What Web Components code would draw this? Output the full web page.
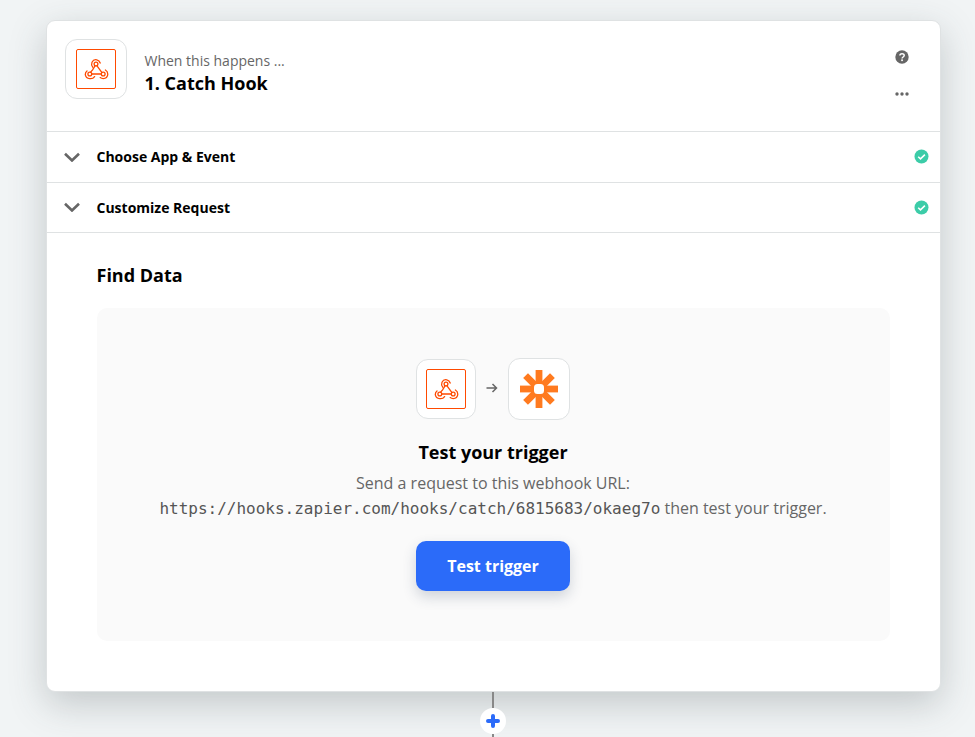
<!DOCTYPE html>
<html>
<head>
<meta charset="utf-8">
<style>
  html, body { margin: 0; height: 100%; overflow: hidden; }
  body {
    background: #f1f4f5;
    font-family: "Open Sans", sans-serif;
    color: #000;
  }
</style>
</head>
<body>
<zap-editor>
  <step-card>
    <step-header slot="header" hint="When this happens ..." title="1. Catch Hook"></step-header>
    <step-row label="Choose App &amp; Event"></step-row>
    <step-row label="Customize Request"></step-row>
    <find-data>
      <test-panel>
        https://hooks.zapier.com/hooks/catch/6815683/okaeg7o
      </test-panel>
    </find-data>
  </step-card>
  <add-step></add-step>
</zap-editor>

<script>
const WEBHOOK_SVG = `
  <svg width="40" height="40" viewBox="0 0 40 40" fill="none" stroke="#ff4a00">
    <rect x=".5" y=".5" width="39" height="39" rx="1.5" stroke-width="1"/>
    <g stroke-width="1.3" stroke-linecap="round">
      <circle cx="20" cy="15" r="1.9"/>
      <circle cx="13.8" cy="25" r="1.9"/>
      <circle cx="27.2" cy="25" r="1.9"/>
      <path d="M19 16.8 L16.6 20.8 L14.6 23.2"/>
      <path d="M21 16.8 L25.8 23.4"/>
      <path d="M15.8 25 H25.2"/>
      <path d="M16.7 18.2 A5 5 0 0 1 16 13.2 A4.4 4.4 0 0 1 20.8 10.8 A4.4 4.4 0 0 1 24.2 14"/>
      <path d="M18.6 27.6 A5 5 0 0 1 13.6 29.6 A4.8 4.8 0 0 1 9.3 25.6 A4.6 4.6 0 0 1 11 22"/>
      <path d="M29.4 21 A4.8 4.8 0 0 1 31.8 25.2 A4.8 4.8 0 0 1 27.2 29.6 A5 5 0 0 1 24.2 28.6"/>
    </g>
  </svg>`;

class IconTile extends HTMLElement {
  connectedCallback() {
    const w = this.getAttribute('w') || 62;
    const h = this.getAttribute('h') || 60;
    this.attachShadow({mode: 'open'}).innerHTML = `
      <style>
        :host {
          display: flex;
          align-items: center;
          justify-content: center;
          box-sizing: border-box;
          flex: none;
          width: ${w}px;
          height: ${h}px;
          background: #fff;
          border: 1px solid #dfe2e3;
          border-radius: 12px;
        }
      </style>
      <slot></slot>`;
  }
}
customElements.define('icon-tile', IconTile);

class WebhookIcon extends HTMLElement {
  connectedCallback() {
    this.attachShadow({mode: 'open'}).innerHTML = `
      <style>:host { display: block; width: 40px; height: 40px; } svg { display: block; }</style>
      ${WEBHOOK_SVG}`;
  }
}
customElements.define('webhook-icon', WebhookIcon);

class ZapierIcon extends HTMLElement {
  connectedCallback() {
    // 8 arms, white rounded hole in the middle
    let arms = '';
    for (let a = 0; a < 4; a++) {
      arms += `<rect x="16.6" y="1" width="6.8" height="38" transform="rotate(${a * 45} 20 20)"/>`;
    }
    this.attachShadow({mode: 'open'}).innerHTML = `
      <style>:host { display: block; width: 40px; height: 40px; } svg { display: block; }</style>
      <svg width="40" height="40" viewBox="0 0 40 40" fill="#ff7a1f">
        ${arms}
        <rect x="15" y="15" width="10" height="10" rx="3.5" fill="#fff"/>
      </svg>`;
  }
}
customElements.define('zapier-icon', ZapierIcon);

class StepCard extends HTMLElement {
  connectedCallback() {
    this.attachShadow({mode: 'open'}).innerHTML = `
      <style>
        :host {
          display: block;
          box-sizing: border-box;
          width: 895px;
          height: 672px;
          background: #fff;
          border: 1px solid #dfe2e3;
          border-radius: 9px;
          box-shadow: 0 12px 36px rgba(60, 70, 75, 0.25);
        }
      </style>
      <slot name="header"></slot>
      <slot></slot>`;
  }
}
customElements.define('step-card', StepCard);

class StepHeader extends HTMLElement {
  connectedCallback() {
    this.attachShadow({mode: 'open'}).innerHTML = `
      <style>
        :host {
          display: flex;
          box-sizing: border-box;
          height: 111px;
          padding: 18px 0 0 18px;
          border-bottom: 1px solid #dfe2e3;
        }
        .titles { flex: 1; padding: 12px 0 0 17.5px; }
        .hint { font-size: 14px; line-height: 20px; color: #666; }
        .title { font-size: 18px; line-height: 26px; font-weight: 700; margin-top: -1px; }
        .actions {
          width: 77px;
          display: flex;
          flex-direction: column;
          align-items: center;
          padding-top: 11px;
          gap: 28px;
        }
        svg { display: block; }
      </style>
      <icon-tile w="62" h="60"><webhook-icon></webhook-icon></icon-tile>
      <div class="titles">
        <div class="hint">${this.getAttribute('hint')}</div>
        <div class="title">${this.getAttribute('title')}</div>
      </div>
      <div class="actions">
        <svg width="14" height="14" viewBox="0 0 14 14">
          <circle cx="7" cy="7" r="6.7" fill="#666"/>
          <path d="M4.9 5.5 C4.9 3 9.2 3 9.2 5.5 C9.2 7 7.1 7 7.1 8.4" fill="none" stroke="#fff" stroke-width="1.5"/>
          <rect x="6.2" y="9.4" width="1.7" height="1.7" fill="#fff"/>
        </svg>
        <svg width="14" height="4" viewBox="0 0 14 4" fill="#666">
          <circle cx="2" cy="2" r="1.7"/><circle cx="7" cy="2" r="1.7"/><circle cx="12" cy="2" r="1.7"/>
        </svg>
      </div>`;
  }
}
customElements.define('step-header', StepHeader);

class StepRow extends HTMLElement {
  connectedCallback() {
    this.attachShadow({mode: 'open'}).innerHTML = `
      <style>
        :host {
          display: flex;
          align-items: center;
          box-sizing: border-box;
          height: 50.5px;
          padding: 0 11px 0 17px;
          border-bottom: 1px solid #dfe2e3;
        }
        .label { flex: 1; font-size: 14px; font-weight: 700; margin-left: 16.5px; }
        svg { display: block; flex: none; }
      </style>
      <svg width="16" height="10" viewBox="0 0 16 10" fill="none" stroke="#666" stroke-width="2.6">
        <path d="M1 1.7 L8 8.5 L15 1.7"/>
      </svg>
      <div class="label">${this.getAttribute('label').replace('&', '&amp;')}</div>
      <svg width="15" height="15" viewBox="0 0 15 15">
        <circle cx="7.5" cy="7.5" r="7" fill="#3ccca8"/>
        <path d="M4.2 7.7 L6.5 9.9 L10.9 5.6" fill="none" stroke="#fff" stroke-width="1.5"/>
      </svg>`;
  }
}
customElements.define('step-row', StepRow);

class FindData extends HTMLElement {
  connectedCallback() {
    this.attachShadow({mode: 'open'}).innerHTML = `
      <style>
        :host { display: block; padding: 30px 50px 0 50px; }
        h2 { margin: 0 0 20px -0.5px; font-size: 18px; line-height: 25px; font-weight: 700; }
      </style>
      <h2>Find Data</h2>
      <slot></slot>`;
  }
}
customElements.define('find-data', FindData);

class TestPanel extends HTMLElement {
  connectedCallback() {
    const url = this.textContent.trim();
    this.attachShadow({mode: 'open'}).innerHTML = `
      <style>
        :host {
          display: flex;
          flex-direction: column;
          align-items: center;
          box-sizing: border-box;
          height: 333px;
          padding: 50px 1px 0 0;
          background: #fafafa;
          border-radius: 10px;
        }
        .icons { display: flex; align-items: center; height: 62px; }
        .arrow { margin: 0 10px 3px; display: block; }
        h3 { margin: 19px 0 0; font-size: 18px; line-height: 26px; font-weight: 700; color: #000; }
        p { margin: 6px 0 0; font-size: 16px; line-height: 25px; color: #666; text-align: center; }
        code { font-family: "DejaVu Sans Mono", monospace; font-size: 16px; color: #555; }
        button {
          margin-top: 20px;
          width: 154px;
          height: 50px;
          border: 0;
          border-radius: 10px;
          background: #2b6bf9;
          color: #fff;
          font: 700 16px "Open Sans", sans-serif;
          box-shadow: 0 6px 14px rgba(40, 60, 90, 0.2);
        }
      </style>
      <div class="icons">
        <icon-tile w="60" h="60"><webhook-icon></webhook-icon></icon-tile>
        <svg class="arrow" width="12" height="10" viewBox="0 0 12 10" fill="none" stroke="#666" stroke-width="1.5">
          <path d="M.5 5 H10.5 M6.5 1 L10.5 5 L6.5 9"/>
        </svg>
        <icon-tile w="62" h="62"><zapier-icon></zapier-icon></icon-tile>
      </div>
      <h3>Test your trigger</h3>
      <p>Send a request to this webhook URL:<br><code>${url}</code> then test your trigger.</p>
      <button>Test trigger</button>`;
  }
}
customElements.define('test-panel', TestPanel);

class AddStep extends HTMLElement {
  connectedCallback() {
    this.attachShadow({mode: 'open'}).innerHTML = `
      <style>
        :host {
          display: flex;
          flex-direction: column;
          align-items: center;
          width: 893px;
        }
        .line { width: 2px; background: #888; height: 16px; flex: none; }
        .plus {
          flex: none;
          width: 26px;
          height: 26px;
          border-radius: 50%;
          background: #fff;
          display: flex;
          align-items: center;
          justify-content: center;
        }
        svg { display: block; }
      </style>
      <div class="line"></div>
      <div class="plus">
        <svg width="14" height="14" viewBox="0 0 14 14" stroke="#2b6bf9" stroke-width="4" stroke-linecap="round">
          <path d="M7 2 V12 M2 7 H12"/>
        </svg>
      </div>
      <div class="line"></div>`;
  }
}
customElements.define('add-step', AddStep);

class ZapEditor extends HTMLElement {
  connectedCallback() {
    this.attachShadow({mode: 'open'}).innerHTML = `
      <style>
        :host { display: block; padding: 20px 0 0 46px; }
      </style>
      <slot></slot>`;
  }
}
customElements.define('zap-editor', ZapEditor);
</script>
</body>
</html>
